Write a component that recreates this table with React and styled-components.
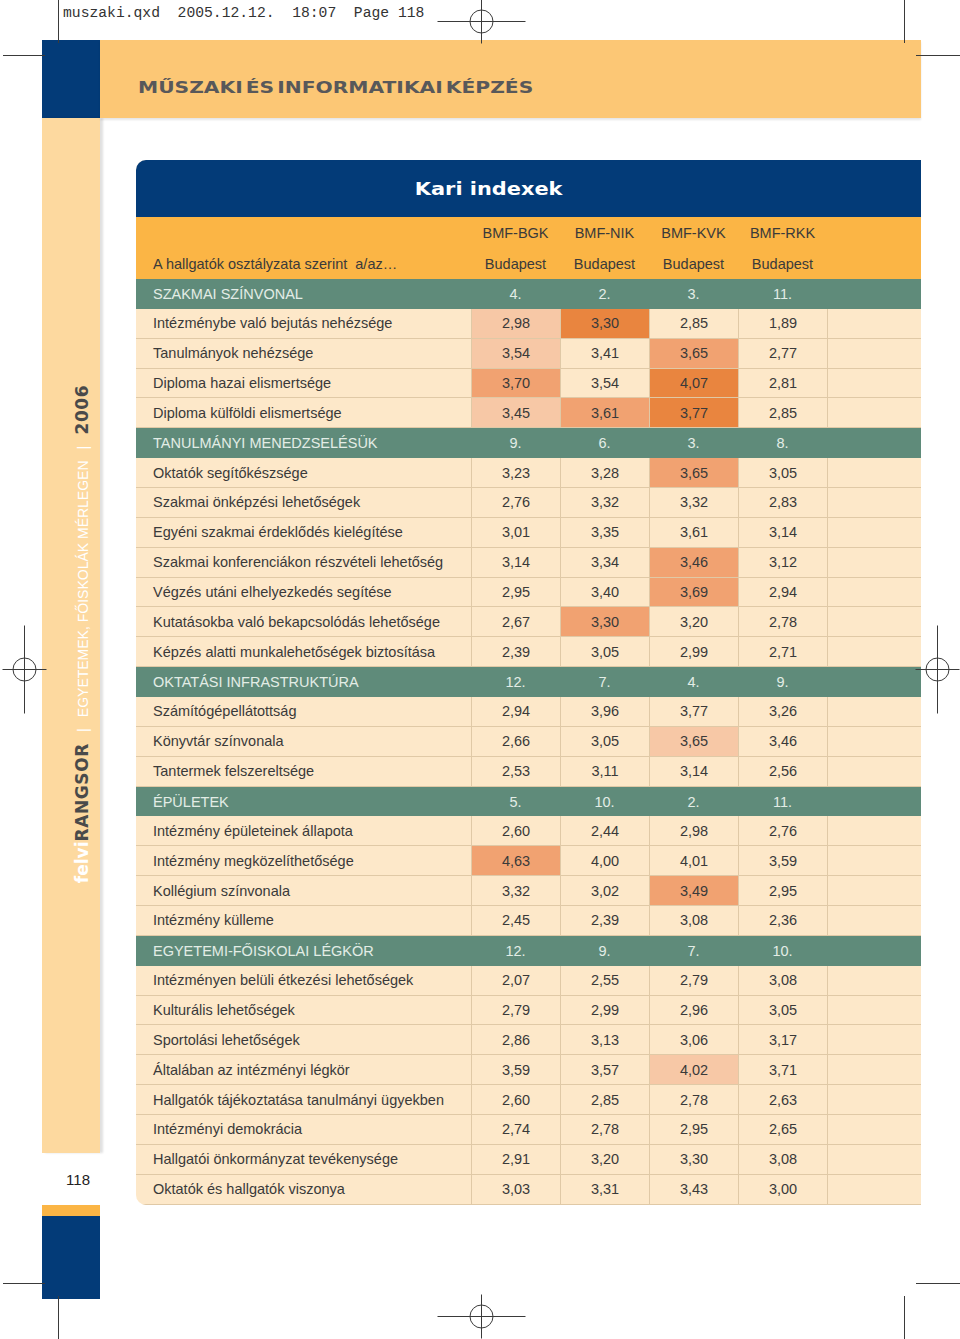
import styled, { createGlobalStyle } from "styled-components";

const GlobalStyle = createGlobalStyle`
  html, body {
    margin: 0;
    padding: 0;
    background: #ffffff;
  }
  * {
    box-sizing: border-box;
  }
`;

const BLUE = "#033b78";
const PEACH = "#fde8c9";
const LINE = "#e0c9a6";
const GREEN = "#5f8b7a";
const HEAD_ORANGE = "#fbb545";
const HEAT = ["transparent", "#f7c8a6", "#f1a271", "#e9853f"];

const sections = [
  {
    title: "SZAKMAI SZÍNVONAL",
    ranks: ["4.", "2.", "3.", "11."],
    rows: [
      ["Intézménybe való bejutás nehézsége", [["2,98", 1], ["3,30", 3], "2,85", "1,89"]],
      ["Tanulmányok nehézsége", [["3,54", 1], "3,41", ["3,65", 2], "2,77"]],
      ["Diploma hazai elismertsége", [["3,70", 2], "3,54", ["4,07", 3], "2,81"]],
      ["Diploma külföldi elismertsége", [["3,45", 1], ["3,61", 2], ["3,77", 3], "2,85"]],
    ],
  },
  {
    title: "TANULMÁNYI MENEDZSELÉSÜK",
    ranks: ["9.", "6.", "3.", "8."],
    rows: [
      ["Oktatók segítőkészsége", ["3,23", "3,28", ["3,65", 2], "3,05"]],
      ["Szakmai önképzési lehetőségek", ["2,76", "3,32", "3,32", "2,83"]],
      ["Egyéni szakmai érdeklődés kielégítése", ["3,01", "3,35", "3,61", "3,14"]],
      ["Szakmai konferenciákon részvételi lehetőség", ["3,14", "3,34", ["3,46", 2], "3,12"]],
      ["Végzés utáni elhelyezkedés segítése", ["2,95", "3,40", ["3,69", 2], "2,94"]],
      ["Kutatásokba való bekapcsolódás lehetősége", ["2,67", ["3,30", 2], "3,20", "2,78"]],
      ["Képzés alatti munkalehetőségek biztosítása", ["2,39", "3,05", "2,99", "2,71"]],
    ],
  },
  {
    title: "OKTATÁSI INFRASTRUKTÚRA",
    ranks: ["12.", "7.", "4.", "9."],
    rows: [
      ["Számítógépellátottság", ["2,94", "3,96", "3,77", "3,26"]],
      ["Könyvtár színvonala", ["2,66", "3,05", ["3,65", 1], "3,46"]],
      ["Tantermek felszereltsége", ["2,53", "3,11", "3,14", "2,56"]],
    ],
  },
  {
    title: "ÉPÜLETEK",
    ranks: ["5.", "10.", "2.", "11."],
    rows: [
      ["Intézmény épületeinek állapota", ["2,60", "2,44", "2,98", "2,76"]],
      ["Intézmény megközelíthetősége", [["4,63", 2], "4,00", "4,01", "3,59"]],
      ["Kollégium színvonala", ["3,32", "3,02", ["3,49", 2], "2,95"]],
      ["Intézmény külleme", ["2,45", "2,39", "3,08", "2,36"]],
    ],
  },
  {
    title: "EGYETEMI-FŐISKOLAI LÉGKÖR",
    ranks: ["12.", "9.", "7.", "10."],
    rows: [
      ["Intézményen belüli étkezési lehetőségek", ["2,07", "2,55", "2,79", "3,08"]],
      ["Kulturális lehetőségek", ["2,79", "2,99", "2,96", "3,05"]],
      ["Sportolási lehetőségek", ["2,86", "3,13", "3,06", "3,17"]],
      ["Általában az intézményi légkör", ["3,59", "3,57", ["4,02", 1], "3,71"]],
      ["Hallgatók tájékoztatása tanulmányi ügyekben", ["2,60", "2,85", "2,78", "2,63"]],
      ["Intézményi demokrácia", ["2,74", "2,78", "2,95", "2,65"]],
      ["Hallgatói önkormányzat tevékenysége", ["2,91", "3,20", "3,30", "3,08"]],
      ["Oktatók és hallgatók viszonya", ["3,03", "3,31", "3,43", "3,00"]],
    ],
  },
];

const faculties = ["BMF-BGK", "BMF-NIK", "BMF-KVK", "BMF-RKK"];

const Page = styled.div`
  position: relative;
  width: 960px;
  height: 1339px;
  background: #fff;
  overflow: hidden;
`;

const Marks = styled.svg`
  position: absolute;
  inset: 0;
  pointer-events: none;
`;

const Slug = styled.div`
  height: 40px;
  padding: 5px 0 0 63px;
  font-family: "Liberation Mono", monospace;
  font-size: 14.7px;
  color: #333;
  white-space: pre;
`;

const Spread = styled.div`
  display: flex;
  padding-left: 42px;
`;

const Rail = styled.div`
  width: 58px;
  display: flex;
  flex-direction: column;
`;

const BlueCap = styled.div`
  height: ${(p) => p.$h}px;
  background: ${BLUE};
`;

const SideBand = styled.div`
  height: 1035px;
  background: #fdd99f;
  box-shadow: 3px 0 2px rgba(0, 0, 0, 0.12);
  display: flex;
  align-items: center;
  justify-content: center;
  padding: 0 0 4px 22px;
`;

const SideLine = styled.div`
  transform: rotate(-90deg);
  display: flex;
  align-items: baseline;
  gap: 11px;
  white-space: nowrap;
  flex-shrink: 0;
`;

const Brand = styled.span`
  font-family: "DejaVu Sans", sans-serif;
  font-weight: 700;
  font-size: 17px;
  color: ${(p) => (p.$light ? "#ffffff" : "#4a4a4a")};
  letter-spacing: ${(p) => (p.$light ? "0" : "0.6px")};
`;

const SideText = styled.span`
  font-family: "Liberation Sans", sans-serif;
  font-size: 14px;
  color: #ffffff;
`;

const Bar = styled.span`
  font-family: "Liberation Sans", sans-serif;
  font-size: 15px;
  color: #ffffff;
`;

const PageNo = styled.div`
  height: 52px;
  display: flex;
  align-items: center;
  justify-content: flex-end;
  padding: 0 10px 0 0;
  font-family: "Liberation Sans", sans-serif;
  font-size: 15px;
  color: #222;
`;

const Tick = styled.div`
  height: 11px;
  background: ${HEAD_ORANGE};
`;

const Main = styled.div`
  width: 821px;
  display: flex;
  flex-direction: column;
`;

const TitleBand = styled.div`
  height: 78px;
  background: #fcc775;
  box-shadow: 0 2px 2px rgba(0, 0, 0, 0.1);
  padding: 39px 0 0 38px;
`;

const Heading = styled.h1`
  margin: 0;
  display: inline-block;
  font-family: "DejaVu Sans", sans-serif;
  font-weight: 700;
  font-size: 15px;
  line-height: 17px;
  color: #58585a;
  word-spacing: -3px;
  transform: scaleX(1.35);
  transform-origin: left center;
`;

const Table = styled.div`
  margin: 42px 0 0 36px;
  width: 785px;
  font-family: "Liberation Sans", sans-serif;
  font-size: 14.5px;
  color: #3a3a3a;
  background: ${PEACH};
  border-radius: 10px 0 0 10px;
  overflow: hidden;
`;

const TableTitle = styled.div`
  height: 57px;
  background: ${BLUE};
  display: flex;
  align-items: center;
  justify-content: center;
  padding-right: 79px;
`;

const TitleText = styled.span`
  display: inline-block;
  font-family: "DejaVu Sans", sans-serif;
  font-weight: 700;
  font-size: 18px;
  color: #fff;
  transform: scaleX(1.16);
`;

const Row = styled.div`
  display: grid;
  grid-template-columns: 335px repeat(4, 89px) 1fr;
  height: ${(p) => p.$h || 29.87}px;
  background: ${(p) => p.$bg || "transparent"};
  color: ${(p) => p.$color || "inherit"};
`;

const Label = styled.div`
  display: flex;
  align-items: center;
  padding-left: 17px;
  white-space: nowrap;
  border-bottom: ${(p) => (p.$lined ? `1px solid ${LINE}` : "none")};
`;

const Cell = styled.div`
  display: flex;
  align-items: center;
  justify-content: center;
  background: ${(p) => HEAT[p.$heat || 0]};
  border-left: ${(p) => (p.$lined ? `1px solid ${LINE}` : "none")};
  border-bottom: ${(p) => (p.$lined ? `1px solid ${LINE}` : "none")};
`;

// registration target: long arm runs along the page edge
const Target = ({ cx, cy, wide }) => (
  <g>
    <circle cx={cx} cy={cy} r="11.5" fill="none" />
    <line x1={cx - (wide ? 44 : 22)} y1={cy} x2={cx + (wide ? 44 : 22)} y2={cy} />
    <line x1={cx} y1={cy - (wide ? 22 : 44)} x2={cx} y2={cy + (wide ? 22 : 44)} />
  </g>
);

const CropMarks = () => (
  <Marks width="960" height="1339" viewBox="0 0 960 1339">
    <g stroke="#3a3a3a" strokeWidth="1">
      <line x1="58.5" y1="0" x2="58.5" y2="43" />
      <line x1="3" y1="55.5" x2="45" y2="55.5" />
      <line x1="904.5" y1="0" x2="904.5" y2="43" />
      <line x1="916" y1="55.5" x2="960" y2="55.5" />
      <line x1="3" y1="1283.5" x2="45" y2="1283.5" />
      <line x1="58.5" y1="1296" x2="58.5" y2="1339" />
      <line x1="916" y1="1283.5" x2="960" y2="1283.5" />
      <line x1="904.5" y1="1296" x2="904.5" y2="1339" />
      <Target cx={481.5} cy={21.5} wide />
      <Target cx={481.5} cy={1316.5} wide />
      <Target cx={24.5} cy={669.5} />
      <Target cx={937.5} cy={669.5} />
    </g>
  </Marks>
);

const valueOf = (v) => (Array.isArray(v) ? v : [v, 0]);

export default function App() {
  return (
    <Page>
      <GlobalStyle />
      <Slug>muszaki.qxd  2005.12.12.  18:07  Page 118</Slug>
      <Spread>
        <Rail>
          <BlueCap $h={78} />
          <SideBand>
            <SideLine>
              <span>
                <Brand $light>felvi</Brand>
                <Brand>RANGSOR</Brand>
              </span>
              <Bar>|</Bar>
              <SideText>EGYETEMEK, FŐISKOLÁK MÉRLEGEN</SideText>
              <Bar>|</Bar>
              <Brand>2006</Brand>
            </SideLine>
          </SideBand>
          <PageNo>118</PageNo>
          <Tick />
          <BlueCap $h={83} />
        </Rail>
        <Main>
          <TitleBand>
            <Heading>MŰSZAKI ÉS INFORMATIKAI KÉPZÉS</Heading>
          </TitleBand>
          <Table>
            <TableTitle>
              <TitleText>Kari indexek</TitleText>
            </TableTitle>
            <Row $h={31} $bg={HEAD_ORANGE}>
              <Label />
              {faculties.map((f) => (
                <Cell key={f}>{f}</Cell>
              ))}
              <Cell />
            </Row>
            <Row $h={31} $bg={HEAD_ORANGE}>
              <Label>A hallgatók osztályzata szerint&nbsp; a/az…</Label>
              {faculties.map((f) => (
                <Cell key={f}>Budapest</Cell>
              ))}
              <Cell />
            </Row>
            {sections.map((s) => (
              <div key={s.title}>
                <Row $bg={GREEN} $color="#e3ede6">
                  <Label>{s.title}</Label>
                  {s.ranks.map((r, i) => (
                    <Cell key={i}>{r}</Cell>
                  ))}
                  <Cell />
                </Row>
                {s.rows.map(([label, values]) => (
                  <Row key={label}>
                    <Label $lined>{label}</Label>
                    {values.map((v, i) => {
                      const [text, heat] = valueOf(v);
                      return (
                        <Cell key={i} $lined $heat={heat}>
                          {text}
                        </Cell>
                      );
                    })}
                    <Cell $lined />
                  </Row>
                ))}
              </div>
            ))}
          </Table>
        </Main>
      </Spread>
      <CropMarks />
    </Page>
  );
}
